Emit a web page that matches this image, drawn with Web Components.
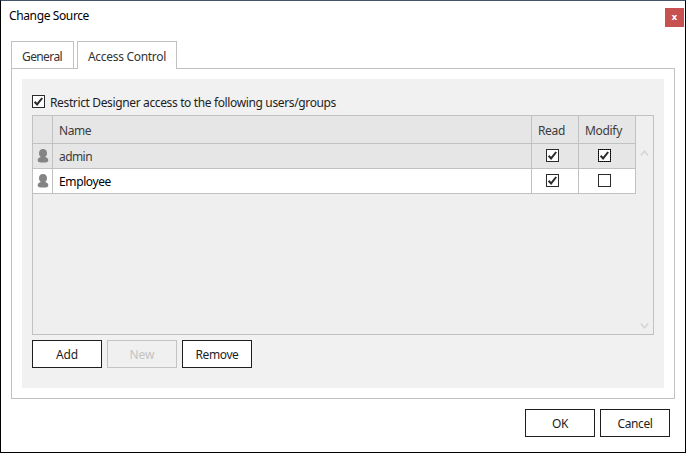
<!DOCTYPE html>
<html lang="en"><head><meta charset="utf-8"><title>Change Source</title>
<style>
html,body{margin:0;height:100%;overflow:hidden}
body{font:12px/16px "Noto Sans","Open Sans",sans-serif;color:#1e1e1e;background:#fff}
</style></head><body>
<source-dialog></source-dialog>
<script>
const define=(name,html,init)=>customElements.define(name,class extends HTMLElement{
  connectedCallback(){
    if(this.shadowRoot)return;
    this.attachShadow({mode:'open'}).innerHTML=html;
    if(init)init(this,this.shadowRoot);
  }
});

// One-line label whose tracking is adjusted to occupy the width given in "w".
define('ui-label',`<style>:host{display:inline-block;white-space:pre;line-height:16px}span{display:inline-block}</style><span><slot></slot></span>`,(el,root)=>{
  const s=root.querySelector('span'),w=+el.getAttribute('w');
  if(!w)return;
  const n=el.textContent.length;
  s.style.letterSpacing=((w-s.getBoundingClientRect().width)/n)+'px';
  el.style.width=w+'px';
});

define('ui-check',`<style>
:host{display:block;width:13px;height:13px;flex:none}
svg{display:block}path,.focus{display:none}:host([checked]) path,:host([focused]) .focus{display:block}
</style><svg width="13" height="13" viewBox="0 0 13 13"><rect x=".5" y=".5" width="12" height="12" fill="#fff" stroke="#2b2b2b"/><rect class="focus" x=".5" y=".5" width="12" height="12" fill="none" stroke="#000" stroke-dasharray="1 1" stroke-dashoffset=".5"/><path d="M2.6 6.7L5.1 9.4L10.2 3" fill="none" stroke="#2b2b2b" stroke-width="2"/></svg>`);

define('ui-button',`<style>
:host{box-sizing:border-box;display:flex;justify-content:center;align-items:center;width:70px;height:28px;border:1px solid #1e1e1e;background:#fff;padding-top:2px}
:host([disabled]){border-color:#c3c3c3;background:#f0f0f0;color:#c3c3c3}
</style><slot></slot>`);

define('ui-tab',`<style>
:host{box-sizing:border-box;display:block;height:27px;padding:7px 0 0 10px;border:1px solid #c1c1c1;border-bottom:0;background:#fff;color:#333}
:host([active]){height:28px;margin-bottom:-1px;position:relative;z-index:1}
</style><slot></slot>`);

define('user-icon',`<style>:host{display:block}svg{display:block}</style>
<svg width="12" height="14" viewBox="0 0 12 14" fill="#848484"><path d="M6 .1C8.7 .1 10 1.8 10 4.2C10 6 9.2 7.2 8.2 8C10.2 8.4 11.3 9.6 11.3 11.2C11.3 12.9 9.9 13.4 8.5 13.4H3.5C2.1 13.4.7 12.9.7 11.2C.7 9.6 1.8 8.4 3.8 8C2.8 7.2 2 6 2 4.2C2 1.8 3.3 .1 6 .1Z"/></svg>`);

define('access-row',`<style>
:host{display:grid;grid-template-columns:19px 478px 46px 56px;gap:1px;height:24px;background:#c1c1c1;border-right:1px solid #c1c1c1;border-bottom:1px solid #c1c1c1}
div{background:var(--fill,#fff);display:flex;align-items:flex-start}
:host([header]){height:27px}
.icon{padding:5px 0 0 4px}
.name{padding:5px 0 0 6px}
.read{padding:5px 0 0 14px}.modify{padding:5px 0 0 19px}
:host([header]) .name{padding-top:7px}
:host([header]) .read{padding:7px 0 0 6px}:host([header]) .modify{padding:7px 0 0 6px}
</style><div class="icon"><slot name="icon"></slot></div><div class="name"><slot name="name"></slot></div><div class="read"><slot name="read"></slot></div><div class="modify"><slot name="modify"></slot></div>`);

define('scroll-gutter',`<style>:host{display:flex;flex-direction:column;justify-content:space-between;padding:33px 0 4px 4px;box-sizing:border-box;background:#efefef}svg{display:block}path{fill:none;stroke:#d3d3d3;stroke-width:1.4}</style>
<svg width="9" height="8"><path d="M.8 6.5L4.5 2L8.2 6.5"/></svg><svg width="9" height="8"><path d="M.8 1.5L4.5 6L8.2 1.5"/></svg>`);

define('source-dialog',`<style>
:host{box-sizing:border-box;display:flex;flex-direction:column;width:686px;height:453px;border:1px solid #000;border-top-color:#44546a;background:#fff;padding:7px 1px 0 0}
header{display:flex;justify-content:space-between;height:33px;color:#000}
.title{padding:0 0 0 8px}
.close{width:19px;height:19px;background:#c75050;color:#fff;font:bold 9px/18px "DejaVu Sans",sans-serif;text-align:center}
nav{display:flex;gap:3px;height:27px;margin-left:10px;align-items:flex-start}
main{box-sizing:border-box;margin-left:10px;width:664px;height:331px;border:1px solid #c1c1c1;padding:10px}
section{box-sizing:border-box;height:309px;background:#f1f1f1;padding:16px 10px 0}
.restrict{display:flex;gap:5px;height:20px}
.table{box-sizing:border-box;display:grid;grid-template-columns:603px 17px;height:220px;border:1px solid #c1c1c1;background:#efefef}
.actions,footer{display:flex;gap:5px}
.actions{margin-top:5px}
footer{justify-content:flex-end;padding:10px 14px 0 0}
</style>
<header><div class="title"><ui-label w="80">Change Source</ui-label></div><div class="close">x</div></header>
<nav><ui-tab style="width:63px"><ui-label w="40">General</ui-label></ui-tab><ui-tab active style="width:100px"><ui-label w="78">Access Control</ui-label></ui-tab></nav>
<main><section>
<div class="restrict"><ui-check checked></ui-check><ui-label w="286">Restrict Designer access to the following users/groups</ui-label></div>
<div class="table"><div>
<access-row header style="--fill:#e6e6e6;color:#3c3c3c"><ui-label slot="name" w="32">Name</ui-label><ui-label slot="read" w="27">Read</ui-label><ui-label slot="modify" w="37">Modify</ui-label></access-row>
<access-row style="--fill:#e6e6e6;color:#3c3c3c"><user-icon slot="icon"></user-icon><ui-label slot="name" w="33">admin</ui-label><ui-check slot="read" checked></ui-check><ui-check slot="modify" checked focused></ui-check></access-row>
<access-row style="color:#000"><user-icon slot="icon"></user-icon><ui-label slot="name" w="52">Employee</ui-label><ui-check slot="read" checked></ui-check><ui-check slot="modify"></ui-check></access-row>
</div><scroll-gutter></scroll-gutter></div>
<div class="actions"><ui-button><ui-label w="22">Add</ui-label></ui-button><ui-button disabled><ui-label w="25">New</ui-label></ui-button><ui-button><ui-label w="43">Remove</ui-label></ui-button></div>
</section></main>
<footer><ui-button><ui-label w="16">OK</ui-label></ui-button><ui-button><ui-label w="35">Cancel</ui-label></ui-button></footer>`);
</script>
</body></html>
